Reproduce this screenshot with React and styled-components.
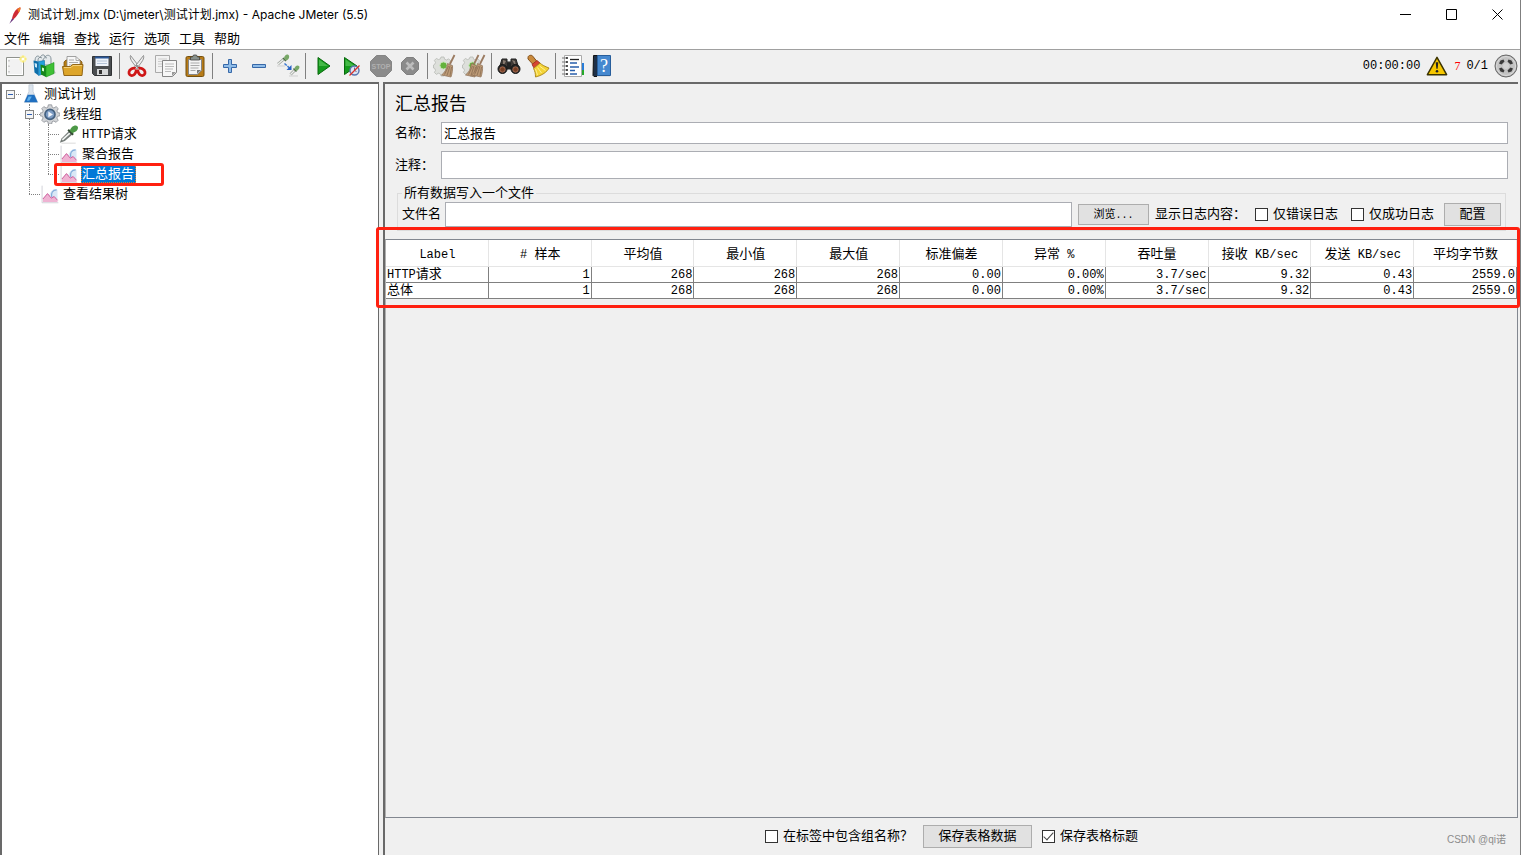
import styled, { createGlobalStyle, css } from "styled-components"
import { useState } from 'react'

const GlobalStyle = createGlobalStyle`
    * {
        box-sizing: border-box;
    }

    body {
        margin: 0;
        background: #f0f0f0;
        color: #000;
        font-family: "Liberation Mono", "Noto Sans CJK SC", monospace;
        font-size: 13px;
        line-height: 16px;
    }

    button, input {
        font: inherit;
        color: inherit;
    }
`

const Window = styled.div`
    height: 100vh;
    display: flex;
    flex-direction: column;
    border-right: 1px solid #7f7f7f;
    overflow: hidden;
`

const TitleBar = styled.header`
    height: 29px;
    flex: none;
    display: flex;
    align-items: center;
    padding-left: 6px;
    background: #fff;
    font-family: Inter, "Noto Sans CJK SC", sans-serif;
    font-size: 12px;
`

const WindowTitle = styled.span`
    flex: 1;
    padding-left: 4px;
    white-space: nowrap;
`

const WindowButton = styled.button`
    width: 46px;
    height: 29px;
    display: flex;
    align-items: center;
    justify-content: center;
    padding: 0;
    border: 0;
    background: none;
`

const MenuBar = styled.nav`
    height: 21px;
    flex: none;
    display: flex;
    align-items: center;
    gap: 9px;
    padding-left: 4px;
    background: #fff;
    border-bottom: 1px solid #a0a0a0;
`

const MenuItem = styled.button`
    padding: 0 0 2px;
    border: 0;
    background: none;
    font-family: "Noto Sans CJK SC", sans-serif;
`

const ToolBar = styled.div`
    height: 32px;
    flex: none;
    display: flex;
    align-items: center;
`

const ToolButton = styled.button`
    width: 29px;
    height: 30px;
    flex: none;
    display: flex;
    align-items: center;
    justify-content: center;
    padding: 0;
    border: 0;
    background: none;
`

const Separator = styled.span`
    width: 1px;
    height: 26px;
    flex: none;
    margin: 0 2px 0 3px;
    background: #808080;
`

const Status = styled.div`
    display: flex;
    align-items: center;
    gap: 6px;
    margin-left: auto;
    padding-right: 2px;
    font-size: 12px;
`

const ErrorCount = styled.span`
    color: #f00;
    font-family: "Liberation Serif", serif;
`

const Body = styled.div`
    flex: 1;
    min-height: 0;
    display: flex;
    gap: 4px;
    padding-right: 2px;
`

const TreePanel = styled.aside`
    width: 25%;
    max-width: 379px;
    flex: none;
    background: #fff;
    border: solid #696969;
    border-width: 2px 1px 0 2px;
`

const TreeRow = styled.div`
    height: 20px;
    display: flex;
    align-items: center;
`

const Guide = styled.span`
    width: 19px;
    height: 20px;
    position: relative;

    &::before {
        content: '';
        position: absolute;
        left: 8px;
        top: 0;
        height: ${({ $kind }) => ($kind === 'end' ? '10px' : '20px')};
        border-left: 1px dotted #808080;
        display: ${({ $kind }) => (['line', 'tee', 'end'].includes($kind) ? 'block' : 'none')};
    }

    &::after {
        content: '';
        position: absolute;
        left: 8px;
        right: 0;
        top: 10px;
        border-top: 1px dotted #808080;
        display: ${({ $kind }) => (['tee', 'end', 'dash'].includes($kind) ? 'block' : 'none')};
    }
`

const Toggle = styled.button`
    width: 9px;
    height: 9px;
    position: absolute;
    z-index: 1;
    left: 4px;
    top: 6px;
    padding: 0;
    border: 1px solid #848484;
    background: linear-gradient(#2f5fb3, #2f5fb3) center / 5px 1px no-repeat #f4f4f4;
`

const TreeIcon = styled.span`
    width: 20px;
    height: 20px;
    display: flex;
    align-items: center;
    justify-content: center;
`

const TreeLabel = styled.button`
    height: 18px;
    margin-left: 2px;
    padding: 2px 2px 0 1px;
    border: 0;
    background: none;
    white-space: nowrap;

    ${({ $selected }) => $selected && css`
        background: #0078d7;
        color: #fff;
        outline: 1px dotted #e08030;
        outline-offset: -1px;
    `}
`

const Marked = styled.div`
    position: relative;

    &::after {
        content: '';
        position: absolute;
        inset: ${({ $inset }) => $inset};
        border: 3px solid #ff2010;
        border-radius: 3px;
        pointer-events: none;
    }
`

const TableMark = styled(Marked)`
    z-index: 1;
`

const Panel = styled.main`
    flex: 1;
    min-width: 0;
    display: flex;
    flex-direction: column;
    border: solid #696969;
    border-width: 2px 0 0 2px;
`

const PanelTitle = styled.h1`
    margin: 9px 10px 5px;
    font-size: 18px;
    font-weight: 400;
    line-height: 24px;
`

const Field = styled.div`
    display: grid;
    grid-template-columns: 46px 1fr;
    align-items: center;
    margin: 0 10px 7px;

    label {
        padding-top: 2px;
    }
`

const TextInput = styled.input`
    width: 100%;
    min-width: 0;
    height: ${({ $height }) => $height};
    padding: 0 2px 2px;
    border: 1px solid #abadb3;
    background: #fff;
    outline: none;
`

const FileGroup = styled.fieldset`
    min-width: 0;
    margin: 0 12px 8px;
    padding: 2px 4px 3px;
    border: 1px solid #dcdcdc;

    legend {
        padding: 1px 2px 0;
        line-height: 13px;
    }
`

const FileRow = styled.div`
    display: flex;
    align-items: center;
    gap: 6px;
    white-space: nowrap;
`

const FileField = styled.div`
    flex: 1;
    display: flex;
    align-items: center;
    gap: 4px;
`

const LogOptions = styled.div`
    display: flex;
    align-items: center;
    gap: 13px;
    padding-left: 3px;
    padding-right: 4px;
`

const Button = styled.button`
    width: ${({ $width }) => $width};
    height: ${({ $small }) => ($small ? '21px' : '23px')};
    padding: 0;
    border: 1px solid #adadad;
    background: #e1e1e1;
    font-size: ${({ $small }) => ($small ? '11px' : '13px')};
    line-height: 16px;
`

const CheckLabel = styled.label`
    display: flex;
    align-items: center;
    gap: 5px;

    input {
        appearance: none;
        width: 13px;
        height: 13px;
        display: grid;
        place-items: center;
        margin: 0;
        border: 1px solid #333;
        background: #fff;
    }

    input:checked::after {
        content: '';
        width: 4px;
        height: 9px;
        margin-top: -3px;
        border: solid #444;
        border-width: 0 1px 1px 0;
        transform: rotate(42deg);
    }
`

const TablePane = styled.section`
    flex: 1;
    border: 1px solid #828790;
    border-left-color: #b0b0b0;
`

const Table = styled.table`
    width: 100%;
    table-layout: fixed;
    border-spacing: 0;
    background: #fff;
    white-space: nowrap;

    th {
        height: 27px;
        padding: 4px 0 0 1px;
        border-right: 1px solid #e5e5e5;
        border-bottom: 1px solid #e5e5e5;
        font-weight: 400;
    }

    td {
        height: 16px;
        padding: 0 1px;
        border-right: 1px solid #808080;
        border-bottom: 1px solid #808080;
        line-height: 15px;
        text-align: right;
    }

    td:first-child {
        text-align: left;
    }
`

const Footer = styled.footer`
    height: 37px;
    flex: none;
    display: flex;
    align-items: center;
    justify-content: center;
    gap: 10px;
    white-space: nowrap;
`

const Watermark = styled.span`
    position: absolute;
    right: 15px;
    bottom: 7px;
    color: #8c8c8c;
    font-family: "Liberation Sans", "Noto Sans CJK SC", sans-serif;
    font-size: 10px;
`

const Latin = styled.span`
    font-size: ${({ $small }) => ($small ? '10px' : '12px')};
    line-height: 1;
`

// Latin runs are set one step smaller than the Chinese text around them
function Mixed({ children, small }) {
    return children.split(/([\x20-\x7e]+)/).map((part, i) => (
        i % 2 ? <Latin key={i} $small={small}>{part}</Latin> : part
    ))
}

function Svg({ size = 24, children }) {
    return (
        <svg width={size} height={size} viewBox="0 0 24 24" fill="none" aria-hidden="true">
            {children}
        </svg>
    )
}

const Gear = () => (
    <>
        <path d="M8 3h3l.6 2.200 2 .8 2-1.200 2 2-1.100 2 .8 2 2.200.6v3l-2.200.6-.8 2 1.100 2-2 2-2-1.200-2 .8L11 22H8l-.6-2-2-.8-2 1.200-2-2 1.100-2-.8-2-1.200-.4v-3l1.200-.6.8-2-1.100-2 2-2 2 1.200 2-.8z" fill="#dddfdb" stroke="#b6b9b4" strokeWidth=".8" />
        <circle cx="10.500" cy="11.500" r="3.600" fill="#63b33c" stroke="#c7e5b8" />
    </>
)

const Broom = ({ x = 0 }) => (
    <g transform={`translate(${x} 0)`}>
        <path d="M21.500 1l-4.500 9" stroke="#9a7a60" strokeWidth="1.800" />
        <path d="M14.500 9.500l5 2.200c.300 4-.200 7.500-1.500 11.300L8.500 21c3.500-2.500 5-6 6-11.500z" fill="#bd9a76" stroke="#8c6e54" strokeWidth=".7" />
        <path d="M15.500 12l-4 8.500M17 12l-3 9.500M18.500 13l-1.500 9" stroke="#82674e" strokeWidth=".7" />
    </g>
)

const icons = {
    new: (
        <Svg>
            <path d="M3.500 3.500h17v18h-17z" fill="#f2f2f2" stroke="#8f928d" />
            <path d="M4.500 4.500h15v16h-15z" stroke="#fff" />
            <path d="M6 6v1.500M6 11.500v1.500M6 17v1.500" stroke="#aaa" />
            <circle cx="20" cy="5" r="3.500" fill="#fff59a" opacity=".8" />
            <path d="M20 1.500v7M16.500 5h7" stroke="#f5e34c" />
            <circle cx="20" cy="5" r="1.500" fill="#fff" />
        </Svg>
    ),
    templates: (
        <Svg>
            <path d="M20 13l4 6-8 3z" fill="#888" opacity=".4" />
            <path d="M3 7c0-6 4-6 5-3 1-4 5-4 5-1 2-3 6-2 6 2v6H4z" fill="#e4e9ec" stroke="#7d8b93" strokeWidth=".9" />
            <path d="M6 7c0-4 2-4 4-3M11 7c0-3 2-4 4-3" stroke="#7d8b93" />
            <path d="M1.500 6.500l5 1v14l-4-3z" fill="#0e6ea9" />
            <path d="M6.500 7.500l6-1v13l-6 2z" fill="#23a0dc" stroke="#0e6ea9" strokeWidth=".6" />
            <path d="M2.500 9l2.500.8v4L3 13z" fill="#c7e8fa" />
            <path d="M8.500 10.500l5.500 1.500v11l-5-2.500z" fill="#16861b" />
            <path d="M14 12l8-3.500v11L14 23z" fill="#3fc035" stroke="#1d9520" strokeWidth=".6" />
            <path d="M10 13.500l2 .7v3.300l-2-.8z" fill="#d8ffd0" />
        </Svg>
    ),
    open: (
        <Svg>
            <path d="M3 8l2-2h14l2 2v6H3z" fill="#b77d12" stroke="#7e5610" strokeWidth=".8" />
            <path d="M6 2.500h9l4 4V14H6z" fill="#f7f7f7" stroke="#8b8b8b" strokeWidth=".8" />
            <path d="M15 2.500v4h4M8 6h5M8 8.500h9M8 11h3" stroke="#aaa" />
            <path d="M1.500 12.500h8l2-2h10.500l-1 11H3z" fill="#dda52a" stroke="#936616" />
            <path d="M3 13.500h7l2-2h9" stroke="#f3d07a" />
        </Svg>
    ),
    save: (
        <Svg>
            <path d="M2.500 2.500h19v19h-17l-2-2z" fill="#4a4d50" stroke="#303234" />
            <path d="M5.500 3h13v9h-13z" fill="#eef3fa" />
            <path d="M5 2.500h14v2H5z" fill="#2b5797" />
            <path d="M7 7h10M7 9.500h10" stroke="#b4c4d8" />
            <path d="M7 15h11v6H7z" fill="#d5d7d8" />
            <path d="M9 16h3v4H9z" fill="#333" />
        </Svg>
    ),
    cut: (
        <Svg>
            <path d="M5.500 1.500c-1 3 1 6 7 13l2-1.500z" fill="#eee" stroke="#858585" strokeWidth=".9" />
            <path d="M18.500 1.500c1 3-1 6-7 13l-2-1.500z" fill="#eee" stroke="#858585" strokeWidth=".9" />
            <circle cx="12" cy="12" r="1" fill="#777" />
            <path d="M10.500 14.500c-2-1-6 .5-6.500 3.500-.4 2.400 1.500 4 3.500 3.500 2.500-.600 3.500-3.500 4-6M13.500 14.500c2-1 6 .5 6.500 3.500.4 2.400-1.500 4-3.500 3.500-2.500-.600-3.500-3.500-4-6" stroke="#cf1717" strokeWidth="2.800" />
        </Svg>
    ),
    copy: (
        <Svg>
            <path d="M1.500 1.500h14v17h-14z" fill="#f2f2f2" stroke="#aaa" />
            <path d="M4 5h9M4 7.500h5M4 10h4M4 12.500h4" stroke="#ccc" />
            <path d="M8.500 6.500h14v12l-4 4h-10z" fill="#f7f7f7" stroke="#858585" />
            <path d="M11 10h9M11 12.500h9M11 15h8M11 17.500h6" stroke="#bbb" />
            <path d="M22 18l-4 4v-4z" fill="#999" />
        </Svg>
    ),
    paste: (
        <Svg>
            <rect x="3" y="2.500" width="18" height="20" rx="1.500" fill="#b77b17" stroke="#75500e" />
            <path d="M5.500 5.500h13v11l-4 4h-9z" fill="#f4f4f4" stroke="#858585" />
            <path d="M7.500 9h9M7.500 11.500h9M7.500 14h8M7.500 16.500h5" stroke="#aaa" />
            <path d="M18 16l-4 4v-4z" fill="#777" />
            <path d="M7.500 3h2l1-2h3l1 2h2v3h-9z" fill="#88918b" stroke="#444" strokeWidth=".8" />
        </Svg>
    ),
    plus: (
        <Svg>
            <path d="M10.500 5.500h3v5h5v3h-5v5h-3v-5h-5v-3h5z" fill="#8fbce8" stroke="#3768a8" />
        </Svg>
    ),
    minus: (
        <Svg>
            <path d="M5.500 10.500h13v3h-13z" fill="#8fbce8" stroke="#3768a8" />
        </Svg>
    ),
    toggle: (
        <Svg>
            <path d="M2 10l6-5M14.500 20.500l4-4" stroke="#9ca19b" strokeWidth="2.800" />
            <path d="M2 10l6-5M14.500 20.500l4-4" stroke="#eef0ed" strokeWidth="1.200" />
            <path d="M7 4l3 3M17.500 14.500l3 3" stroke="#4f6b4a" strokeWidth="1.500" />
            <path d="M8 4.500c0-3 3-5 4.500-3.500S13 6 10 6.500zM18.500 15c0-3 3-4.500 4.500-3S22 16.500 20.500 17z" fill="#78a868" />
            <path d="M1 12h8M13 22h9" stroke="#cfcfcf" />
            <path d="M8.500 9.500l5 4.500" stroke="#3b78d0" strokeWidth="1.500" strokeDasharray="3 1" />
            <path d="M15.500 11v5h-5z" fill="#2861c4" />
        </Svg>
    ),
    play: (
        <Svg>
            <path d="M7 3.500L19 12 7 20.500z" fill="#149b1c" stroke="#08690c" />
            <path d="M8 5.500l9 6.500H8z" fill="#44b947" />
        </Svg>
    ),
    playNoTimers: (
        <Svg>
            <path d="M4.500 3.500L17 12 4.500 20.500z" fill="#149b1c" stroke="#08690c" />
            <path d="M5.500 5.500L15 12H5.500z" fill="#44b947" />
            <circle cx="14.500" cy="16.500" r="4.500" fill="#dbe5f4" stroke="#5874b0" strokeWidth="1.400" />
            <path d="M14.500 13.500v3l2 1" stroke="#668" />
            <path d="M9.500 21.500l10-10" stroke="#dd2f27" strokeWidth="1.300" />
        </Svg>
    ),
    stop: (
        <Svg>
            <path d="M7.500 1.500h9l6 6v9l-6 6h-9l-6-6v-9z" fill="#8b8b8b" stroke="#858585" />
            <text x="12" y="15" textAnchor="middle" fontFamily="Liberation Sans Narrow, Liberation Sans" fontWeight="bold" fontSize="7" fill="#b0b0b0">STOP</text>
        </Svg>
    ),
    shutdown: (
        <Svg>
            <path d="M8.500 3.500h7l5 5v7l-5 5h-7l-5-5v-7z" fill="#8b8b8b" stroke="#808080" />
            <path d="M8.500 8.500l7 7M15.500 8.500l-7 7" stroke="#bdbdbd" strokeWidth="2.600" />
        </Svg>
    ),
    clear: <Svg><Gear /><Broom /></Svg>,
    clearAll: <Svg><Gear /><Broom x={-5} /><Broom x={1} /></Svg>,
    search: (
        <Svg>
            <path d="M5 5h5v3h4V5h5l3 10H2z" fill="#3f3a37" stroke="#222" />
            <path d="M6 6l3 1-3 6zM15 6l3 1 1 6z" fill="#877a70" />
            <path d="M10 9h4v6h-4z" fill="#242424" />
            <circle cx="5.500" cy="15" r="4.500" fill="#282828" stroke="#151515" />
            <circle cx="18.500" cy="15" r="4.500" fill="#282828" stroke="#151515" />
            <circle cx="5.500" cy="15.500" r="2.700" fill="#773f25" stroke="#b1755a" strokeWidth=".8" />
            <circle cx="18.500" cy="15.500" r="2.700" fill="#773f25" stroke="#b1755a" strokeWidth=".8" />
        </Svg>
    ),
    sweep: (
        <Svg>
            <path d="M2 3.500c0-2.500 4-3 5-1l4 5-4 3L2 5z" fill="#c98a3c" stroke="#86521c" />
            <path d="M6 10.500l5-4 3 2.500-6 5z" fill="#d74530" stroke="#992b1e" strokeWidth=".8" />
            <path d="M7.500 14.500l6.500-5.500c2 2 5 3.500 9 5-2 4-7 7.500-13.500 9 0-3-.500-6-2-8.500z" fill="#f3d337" stroke="#a88316" strokeWidth=".9" />
            <path d="M9.500 15l2 6M11.500 13.500l4 5.500M13.500 12l6 4.500" stroke="#fff094" />
        </Svg>
    ),
    functions: (
        <Svg>
            <path d="M20 9h3v7h-3z" fill="#267cd8" />
            <path d="M20 16h3v5h-3z" fill="#24a829" />
            <path d="M3.500 1.500h17v21h-17z" fill="#fff" stroke="#aaa" />
            <path d="M9 9h7M9 13h9M9 16.500h5M9 20h7" stroke="#285fac" strokeWidth="1.300" />
            <path d="M9 5.500h9" stroke="#222" strokeWidth="1.300" />
            <path d="M1 4h5M1 8h5M1 12h5M1 16h5M1 20h5" stroke="#777" strokeWidth="1.200" />
            <path d="M6 3v2M6 7v2M6 11v2M6 15v2M6 19v2" stroke="#222" strokeWidth="1.500" />
        </Svg>
    ),
    help: (
        <Svg>
            <path d="M3.500 1.500H8v21H4l-1-1z" fill="#1e3048" stroke="#111" />
            <path d="M7.500 1.500h13v20h-13z" fill="#4588cf" stroke="#285e9b" />
            <path d="M7 22.500h13" stroke="#ddd" />
            <text x="14" y="17.500" textAnchor="middle" fontFamily="Liberation Serif" fontSize="18" fill="#fff">?</text>
        </Svg>
    ),
    warning: (
        <Svg size={22}>
            <path d="M12 2.500L22.500 21.500h-21z" fill="#f6c700" stroke="#3b3300" strokeWidth="1.600" strokeLinejoin="round" />
            <path d="M10.600 8h2.800l-.7 7h-1.400z" fill="#222" />
            <circle cx="12" cy="17.800" r="1.400" fill="#222" />
        </Svg>
    ),
    threads: (
        <Svg>
            <circle cx="12" cy="12" r="11" fill="#b4b4b4" stroke="#666" />
            <circle cx="12" cy="12" r="9.500" fill="#c2c2c2" stroke="#dcdcdc" />
            <path d="M9.500 5.500l-3 1-1.500 3 2.500 1 3-3zM14.500 5.500l3 1 1.500 3-2.500 1-3-3zM9.500 18.500l-3-1L5 14.500l2.500-1 3 3zM14.500 18.500l3-1 1.500-3-2.500-1-3 3z" fill="#3a3a3a" />
            <circle cx="12" cy="12" r="3" fill="#d2d2d2" />
        </Svg>
    ),
    feather: (
        <Svg size={18}>
            <path d="M8 17C9 11 12 5 16 3l3-1.500c1 2-1 6-3 9-2 3-3.500 5-6 7z" fill="#cf2a35" />
            <path d="M15 4l4-2.500c1.200 2-.5 5-2 7.500z" fill="#ee7d25" />
            <path d="M4.500 23.500l3.500-7 2.500 1-3 3z" fill="#66307a" />
        </Svg>
    ),
    flask: (
        <Svg size={20}>
            <path d="M9.500 1h5v8l5.500 13h-16l5.500-13z" fill="#dce4ed" stroke="#b9c4d0" strokeWidth=".8" />
            <path d="M8 13h8l4 9H4z" fill="#1f6fc0" />
            <path d="M9 15h4l-3 5H7z" fill="#5fb0ec" />
        </Svg>
    ),
    threadGroup: (
        <Svg size={20}>
            <path d="M10 1h4l.7 3 2 .8 2.700-1.700 2.500 2.500-1.600 2.700.8 2L24 11v3l-3 .8-.8 2 1.600 2.700-2.500 2.500-2.700-1.600-2 .8-.6 2.800h-4l-.7-2.800-2-.8-2.700 1.600-2.500-2.500 1.600-2.700-.8-2L0 14v-3l3-.7.8-2-1.700-2.700 2.500-2.500 2.700 1.700 2-.8z" fill="#d2d4d7" stroke="#8e9297" />
            <circle cx="12" cy="12.500" r="6" fill="#7d9cc4" stroke="#44607f" strokeWidth="2" />
            <path d="M10 9l5.500 3.500L10 16z" fill="#f2f6fb" />
        </Svg>
    ),
    sampler: (
        <Svg size={20}>
            <path d="M1 22.500l2-5 9-9 4 4-9 8z" fill="#747b78" />
            <path d="M4 19l9-8" stroke="#f1f4f2" strokeWidth="2" />
            <path d="M11 7l6 6" stroke="#354c34" strokeWidth="2.500" />
            <path d="M13 8c1-4 5-7 8-6s2 5-1 7l-4 2z" fill="#4d9947" />
            <path d="M3 23h17" stroke="#d2d2d2" />
        </Svg>
    ),
    listener: (
        <Svg size={20}>
            <path d="M2.500 2v20.500H22" stroke="#c9c9d2" />
            <path d="M11 14c1-4 4-8 8-8l2 1v12z" fill="#d9e8f6" />
            <path d="M14 16c-1-5 1-9 6-9" stroke="#84addb" strokeWidth="1.500" />
            <path d="M3.500 18L9 11.500l4.500 5.500 3.500-2 4 4.500v2H3.500z" fill="#efb3d3" />
            <path d="M3.500 18L9 11.500l4.500 5.500 3.500-2 4 4.500" stroke="#cd5c9c" strokeWidth="1.200" />
        </Svg>
    ),
}

const menus = ['文件', '编辑', '查找', '运行', '选项', '工具', '帮助']

const tools = [
    ['new', 'templates', 'open', 'save'],
    ['cut', 'copy', 'paste'],
    ['plus', 'minus', 'toggle'],
    ['play', 'playNoTimers', 'stop', 'shutdown'],
    ['clear', 'clearAll'],
    ['search', 'sweep'],
    ['functions', 'help'],
]

const nodes = [
    { label: '测试计划', icon: 'flask', guides: ['dash'], toggle: true },
    { label: '线程组', icon: 'threadGroup', guides: ['none', 'tee'], toggle: true },
    { label: 'HTTP请求', icon: 'sampler', guides: ['none', 'line', 'tee'] },
    { label: '聚合报告', icon: 'listener', guides: ['none', 'line', 'tee'] },
    { label: '汇总报告', icon: 'listener', guides: ['none', 'line', 'end'], marked: true },
    { label: '查看结果树', icon: 'listener', guides: ['none', 'end'] },
]

const columns = ['Label', '# 样本', '平均值', '最小值', '最大值', '标准偏差', '异常 %', '吞吐量', '接收 KB/sec', '发送 KB/sec', '平均字节数']

const rows = [
    ['HTTP请求', '1', '268', '268', '268', '0.00', '0.00%', '3.7/sec', '9.32', '0.43', '2559.0'],
    ['总体', '1', '268', '268', '268', '0.00', '0.00%', '3.7/sec', '9.32', '0.43', '2559.0'],
]

function Tools() {
    return (
        <ToolBar>
            {tools.map((group, i) => [
                i > 0 && <Separator key={`sep-${i}`} />,
                group.map((name) => (
                    <ToolButton key={name} aria-label={name}>{icons[name]}</ToolButton>
                )),
            ])}
            <Status>
                <Latin>00:00:00</Latin>
                {icons.warning}
                <ErrorCount>7</ErrorCount>
                <Latin>0/1</Latin>
                {icons.threads}
            </Status>
        </ToolBar>
    )
}

function TreeNode({ node, selected, onSelect }) {
    const row = (
        <TreeRow>
            {node.guides.map((kind, i) => (
                <Guide key={i} $kind={kind}>
                    {node.toggle && i === node.guides.length - 1 && <Toggle aria-label="toggle" />}
                </Guide>
            ))}
            <TreeIcon>{icons[node.icon]}</TreeIcon>
            <TreeLabel $selected={selected} onClick={onSelect}>
                <Mixed>{node.label}</Mixed>
            </TreeLabel>
        </TreeRow>
    )

    return node.marked ? <Marked $inset="-1px 214px -2px 52px">{row}</Marked> : row
}

function Tree() {
    const [selected, setSelected] = useState('汇总报告');

    return (
        <TreePanel>
            {nodes.map((node) => (
                <TreeNode
                    key={node.label}
                    node={node}
                    selected={selected === node.label}
                    onSelect={() => setSelected(node.label)}
                />
            ))}
        </TreePanel>
    )
}

function Check({ label, checked }) {
    return (
        <CheckLabel>
            <input type="checkbox" defaultChecked={checked} />
            {label}
        </CheckLabel>
    )
}

function SummaryReport() {
    return (
        <Panel>
            <PanelTitle>汇总报告</PanelTitle>
            <Field>
                <label htmlFor="name">名称：</label>
                <TextInput id="name" $height="22px" defaultValue="汇总报告" />
            </Field>
            <Field>
                <label htmlFor="comment">注释：</label>
                <TextInput id="comment" $height="28px" />
            </Field>
            <FileGroup>
                <legend>所有数据写入一个文件</legend>
                <FileRow>
                    <FileField>
                        <label htmlFor="file">文件名</label>
                        <TextInput id="file" $height="25px" />
                    </FileField>
                    <Button $small $width="71px"><Mixed small>浏览...</Mixed></Button>
                    <span>显示日志内容：</span>
                    <LogOptions>
                        <Check label="仅错误日志" />
                        <Check label="仅成功日志" />
                    </LogOptions>
                    <Button $width="57px">配置</Button>
                </FileRow>
            </FileGroup>
            <TablePane>
                <TableMark $inset="-13px -3px -9px -10px">
                    <Table>
                        <thead>
                            <tr>
                                {columns.map((name) => <th key={name}><Mixed>{name}</Mixed></th>)}
                            </tr>
                        </thead>
                        <tbody>
                            {rows.map((row) => (
                                <tr key={row[0]}>
                                    {row.map((value, i) => <td key={i}><Mixed>{value}</Mixed></td>)}
                                </tr>
                            ))}
                        </tbody>
                    </Table>
                </TableMark>
            </TablePane>
            <Footer>
                <Check label="在标签中包含组名称？" />
                <Button $width="109px">保存表格数据</Button>
                <Check label="保存表格标题" checked />
            </Footer>
        </Panel>
    )
}

function App() {
    return (
        <>
            <GlobalStyle />
            <Window>
                <TitleBar>
                    {icons.feather}
                    <WindowTitle>测试计划.jmx (D:\jmeter\测试计划.jmx) - Apache JMeter (5.5)</WindowTitle>
                    <WindowButton aria-label="minimize">
                        <svg width="11" height="11" stroke="#000"><path d="M0 5.500h11" /></svg>
                    </WindowButton>
                    <WindowButton aria-label="maximize">
                        <svg width="11" height="11" stroke="#000" fill="none"><path d="M.5.5h10v10H.5z" /></svg>
                    </WindowButton>
                    <WindowButton aria-label="close">
                        <svg width="11" height="11" stroke="#000"><path d="M.5.5l10 10M10.500.5l-10 10" /></svg>
                    </WindowButton>
                </TitleBar>
                <MenuBar>
                    {menus.map((name) => <MenuItem key={name}>{name}</MenuItem>)}
                </MenuBar>
                <Tools />
                <Body>
                    <Tree />
                    <SummaryReport />
                </Body>
                <Watermark>CSDN @qi诺</Watermark>
            </Window>
        </>
    )
}

export default App
